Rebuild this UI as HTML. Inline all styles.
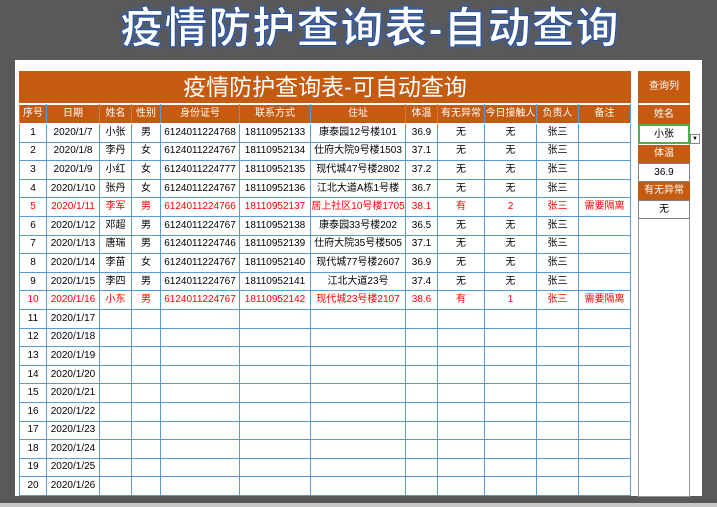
<!DOCTYPE html><html><head><meta charset="utf-8"><style>
body{margin:0;width:717px;height:507px;background:#595959;overflow:hidden;position:relative;font-family:"Liberation Sans","Noto Sans CJK SC",sans-serif}
.t{position:absolute;left:100px;top:0px;width:540px;text-align:center;font-size:43px;font-weight:bold;color:#fff;line-height:58px;letter-spacing:1px;-webkit-text-stroke:1px #2a4f8f;text-shadow:0 0 3px #3a6ad0,0 0 2px #3a6ad0}
.p{position:absolute;left:15px;top:60px;width:687px;height:436px;background:#fff}
.bar{position:absolute;left:19px;top:71px;width:612px;height:32px;background:#c55a11;color:#fff;font-size:23px;line-height:32px;text-align:center}
table{position:absolute;left:19px;top:104px;border-collapse:collapse;table-layout:fixed;font-size:10px}
td{border:1px solid #5b9bd5;height:17.6px;padding:0;text-align:center;white-space:nowrap;overflow:hidden;color:#000;line-height:1;vertical-align:middle}
tr.h td{background:#c55a11;color:#fff;height:18px;border-color:#fff #5b9bd5}
tr.r td{color:#f00}
.q{position:absolute;left:638px;width:52px;text-align:center;font-size:10px}
.o{background:#c55a11;color:#fff}
.w{background:#fff;border:1px solid #7f7f7f;box-sizing:border-box}
.bot{position:absolute;left:0;top:503px;width:717px;height:4px;background:#c8c8c8}
</style></head><body>
<div class="t">疫情防护查询表-自动查询</div>
<div class="p"></div>
<div class="bar">疫情防护查询表-可自动查询</div>
<table>
<colgroup><col style="width:27px"><col style="width:53px"><col style="width:32px"><col style="width:29px"><col style="width:79px"><col style="width:71px"><col style="width:95px"><col style="width:32px"><col style="width:47px"><col style="width:52px"><col style="width:42px"><col style="width:52px"></colgroup>
<tr class="h"><td>序号</td><td>日期</td><td>姓名</td><td>性别</td><td>身份证号</td><td>联系方式</td><td>住址</td><td>体温</td><td>有无异常</td><td>今日接触人</td><td>负责人</td><td>备注</td></tr>
<tr><td>1</td><td>2020/1/7</td><td>小张</td><td>男</td><td>6124011224768</td><td>18110952133</td><td>康泰园12号楼101</td><td>36.9</td><td>无</td><td>无</td><td>张三</td><td></td></tr>
<tr><td>2</td><td>2020/1/8</td><td>李丹</td><td>女</td><td>6124011224767</td><td>18110952134</td><td>仕府大院9号楼1503</td><td>37.1</td><td>无</td><td>无</td><td>张三</td><td></td></tr>
<tr><td>3</td><td>2020/1/9</td><td>小红</td><td>女</td><td>6124011224777</td><td>18110952135</td><td>现代城47号楼2802</td><td>37.2</td><td>无</td><td>无</td><td>张三</td><td></td></tr>
<tr><td>4</td><td>2020/1/10</td><td>张丹</td><td>女</td><td>6124011224767</td><td>18110952136</td><td>江北大道A栋1号楼</td><td>36.7</td><td>无</td><td>无</td><td>张三</td><td></td></tr>
<tr class="r"><td>5</td><td>2020/1/11</td><td>李军</td><td>男</td><td>6124011224766</td><td>18110952137</td><td>居上社区10号楼1705</td><td>38.1</td><td>有</td><td>2</td><td>张三</td><td>需要隔离</td></tr>
<tr><td>6</td><td>2020/1/12</td><td>邓超</td><td>男</td><td>6124011224767</td><td>18110952138</td><td>康泰园33号楼202</td><td>36.5</td><td>无</td><td>无</td><td>张三</td><td></td></tr>
<tr><td>7</td><td>2020/1/13</td><td>唐瑞</td><td>男</td><td>6124011224746</td><td>18110952139</td><td>仕府大院35号楼505</td><td>37.1</td><td>无</td><td>无</td><td>张三</td><td></td></tr>
<tr><td>8</td><td>2020/1/14</td><td>李苗</td><td>女</td><td>6124011224767</td><td>18110952140</td><td>现代城77号楼2607</td><td>36.9</td><td>无</td><td>无</td><td>张三</td><td></td></tr>
<tr><td>9</td><td>2020/1/15</td><td>李四</td><td>男</td><td>6124011224767</td><td>18110952141</td><td>江北大道23号</td><td>37.4</td><td>无</td><td>无</td><td>张三</td><td></td></tr>
<tr class="r"><td>10</td><td>2020/1/16</td><td>小东</td><td>男</td><td>6124011224767</td><td>18110952142</td><td>现代城23号楼2107</td><td>38.6</td><td>有</td><td>1</td><td>张三</td><td>需要隔离</td></tr>
<tr><td>11</td><td>2020/1/17</td><td></td><td></td><td></td><td></td><td></td><td></td><td></td><td></td><td></td><td></td></tr>
<tr><td>12</td><td>2020/1/18</td><td></td><td></td><td></td><td></td><td></td><td></td><td></td><td></td><td></td><td></td></tr>
<tr><td>13</td><td>2020/1/19</td><td></td><td></td><td></td><td></td><td></td><td></td><td></td><td></td><td></td><td></td></tr>
<tr><td>14</td><td>2020/1/20</td><td></td><td></td><td></td><td></td><td></td><td></td><td></td><td></td><td></td><td></td></tr>
<tr><td>15</td><td>2020/1/21</td><td></td><td></td><td></td><td></td><td></td><td></td><td></td><td></td><td></td><td></td></tr>
<tr><td>16</td><td>2020/1/22</td><td></td><td></td><td></td><td></td><td></td><td></td><td></td><td></td><td></td><td></td></tr>
<tr><td>17</td><td>2020/1/23</td><td></td><td></td><td></td><td></td><td></td><td></td><td></td><td></td><td></td><td></td></tr>
<tr><td>18</td><td>2020/1/24</td><td></td><td></td><td></td><td></td><td></td><td></td><td></td><td></td><td></td><td></td></tr>
<tr><td>19</td><td>2020/1/25</td><td></td><td></td><td></td><td></td><td></td><td></td><td></td><td></td><td></td><td></td></tr>
<tr><td>20</td><td>2020/1/26</td><td></td><td></td><td></td><td></td><td></td><td></td><td></td><td></td><td></td><td></td></tr>
</table>
<div class="q w" style="top:71px;height:426px;border-color:#999"></div>
<div class="q o" style="top:71px;height:32px;line-height:32px">查询列</div>
<div class="q o" style="top:105px;height:19px;line-height:19px">姓名</div>
<div class="q w" style="top:124px;height:20px;line-height:17px;border:2px solid #4caf50">小张</div>
<div style="position:absolute;left:690px;top:134px;width:8px;height:8px;border:1px solid #888;background:#fff;font-size:6px;line-height:8px;text-align:center">▼</div>
<div class="q o" style="top:145px;height:18px;line-height:18px">体温</div>
<div class="q w" style="top:163px;height:19px;line-height:18px">36.9</div>
<div class="q o" style="top:182px;height:18px;line-height:18px">有无异常</div>
<div class="q w" style="top:200px;height:19px;line-height:18px">无</div>
<div class="bot"></div>
</body></html>
